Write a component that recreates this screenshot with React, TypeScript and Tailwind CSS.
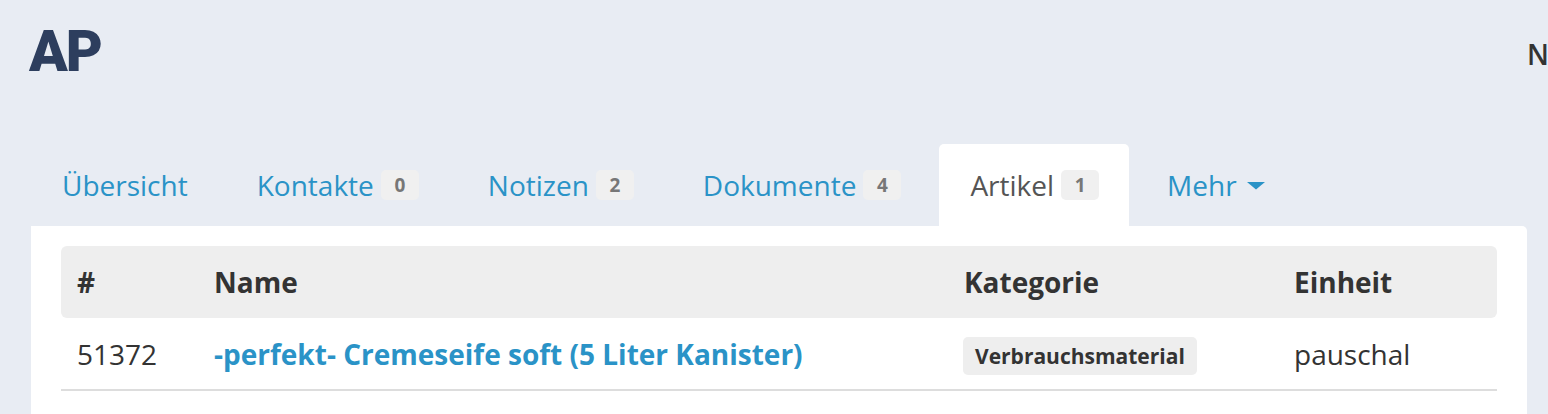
const tabs = [
	{ label: "Übersicht" },
	{ label: "Kontakte", count: 0 },
	{ label: "Notizen", count: 2 },
	{ label: "Dokumente", count: 4 },
	{ label: "Artikel", count: 1, active: true },
]

function Badge({ n }: { n: number }) {
	return (
		<span className="ml-[7px] inline-flex h-[30px] min-w-[38px] items-center justify-center rounded-[5px] bg-[#f0f0f0] px-3 text-[19px] font-bold text-[#777]">
			{n}
		</span>
	)
}

export default function App() {
	return (
		<div className="min-h-screen w-full overflow-hidden bg-[#e8ecf3] font-['Open_Sans',sans-serif]">
			<header className="flex h-[144px] items-start justify-between pl-[29px] pt-[15px]">
				<h1 className="font-['Roboto',sans-serif] text-[57px] font-black leading-[74px] tracking-[-2px] text-[#2d3e5e]">AP</h1>
				<div className="mt-[18px] w-[21px] overflow-hidden whitespace-nowrap text-[28px] font-semibold text-[#333]">Neu</div>
			</header>

			<div className="pl-[31px] pr-[21px]">
				<nav className="flex h-[82px] items-stretch gap-[7px] text-[28px]">
					{tabs.map((t) => (
						<div
							key={t.label}
							className={
								t.active
									? "flex items-center rounded-t-[5px] bg-white pl-[31px] pr-[30px] text-[#555]"
									: "flex items-center px-[31px] text-[#2a93c7]"
							}
						>
							{t.label}
							{t.count !== undefined && <Badge n={t.count} />}
						</div>
					))}
					<div className="flex items-center px-[31px] text-[#2a93c7]">
						Mehr
						<svg className="ml-[10px]" width="18" height="9" viewBox="0 0 18 9">
							<path d="M0 1h18L9 8.5z" fill="#2a93c7" />
						</svg>
					</div>
				</nav>

				<div className="rounded-[5px] rounded-tl-none bg-white px-[30px] pb-[40px] pt-[20px]">
					<table className="w-full border-collapse text-left">
						<thead>
							<tr className="h-[72px] text-[28px] font-bold text-[#333]">
								<th className="w-[137px] rounded-l-[6px] bg-[#eeeeee] pl-[16px]">#</th>
								<th className="w-[750px] bg-[#eeeeee] pl-[16px]">Name</th>
								<th className="w-[330px] bg-[#eeeeee] pl-[16px]">Kategorie</th>
								<th className="rounded-r-[6px] bg-[#eeeeee] pl-[16px]">Einheit</th>
							</tr>
						</thead>
						<tbody>
							<tr className="h-[72px] border-b-2 border-[#dddddd] text-[28px] text-[#333]">
								<td className="pl-[16px]">51372</td>
								<td className="pl-[16px] font-bold text-[#2a93c7]">-perfekt- Cremeseife soft (5 Liter Kanister)</td>
								<td className="pl-[15px]">
									<span className="inline-flex h-[38px] items-center rounded-[5px] bg-[#eeeeee] px-[12px] text-[21px] font-bold text-[#333]">
										Verbrauchsmaterial
									</span>
								</td>
								<td className="pl-[16px]">pauschal</td>
							</tr>
						</tbody>
					</table>
				</div>
			</div>
		</div>
	)
}
